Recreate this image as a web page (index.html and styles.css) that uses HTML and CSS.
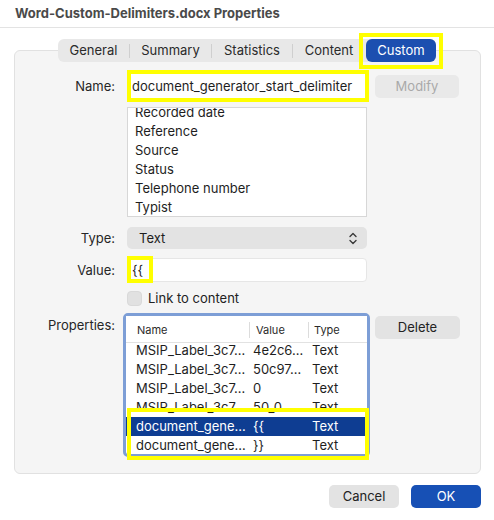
FILE: index.html
```html
<!DOCTYPE html>
<html>
<head>
<meta charset="utf-8">
<link rel="stylesheet" href="styles.css">
</head>
<body>
<div class="titlebar">Word-Custom-Delimiters.docx Properties</div>
<div class="content">
  <div class="tabs-wrap">
    <div class="tabs">
      <div class="tab w1">General</div>
      <div class="sep"></div>
      <div class="tab w2">Summary</div>
      <div class="sep"></div>
      <div class="tab w3">Statistics</div>
      <div class="sep"></div>
      <div class="tab w4">Content</div>
      <div class="tab w5 active">Custom<div class="hl hl-tab"></div></div>
    </div>
  </div>
  <div class="panel">
    <div class="row row-name">
      <div class="label">Name:</div>
      <div class="name-field">document_generator_start_delimiter</div>
      <div class="btn btn-modify">Modify</div>
    </div>
    <div class="row row-list">
      <div class="label"></div>
      <div class="listbox">
        <div class="list-inner">
          <div class="li">Recorded date</div>
          <div class="li">Reference</div>
          <div class="li">Source</div>
          <div class="li">Status</div>
          <div class="li">Telephone number</div>
          <div class="li">Typist</div>
        </div>
      </div>
    </div>
    <div class="row row-type">
      <div class="label">Type:</div>
      <div class="select">
        <span>Text</span>
        <svg class="chev" width="8" height="13" viewBox="0 0 8 13"><path d="M1 4.5 L4 1.5 L7 4.5 M1 8.5 L4 11.5 L7 8.5" fill="none" stroke="#3a3a3a" stroke-width="1.4" stroke-linecap="round" stroke-linejoin="round"/></svg>
      </div>
    </div>
    <div class="row row-value">
      <div class="label">Value:</div>
      <div class="value-field">{{<div class="hl hl-value"></div></div>
    </div>
    <div class="row row-link">
      <div class="label"></div>
      <div class="checkbox"></div>
      <div class="link-text">Link to content</div>
    </div>
    <div class="row row-props">
      <div class="label label-props">Properties:</div>
      <div class="table">
        <div class="thead">
          <div class="c1 th">Name</div>
          <div class="c2 th">Value</div>
          <div class="c3 th">Type</div>
        </div>
        <div class="tbody">
          <div class="tbody-inner">
            <div class="tr"><div class="c1">MSIP_Label_3c7…</div><div class="c2">4e2c6…</div><div class="c3">Text</div></div>
            <div class="tr"><div class="c1">MSIP_Label_3c7…</div><div class="c2">50c97…</div><div class="c3">Text</div></div>
            <div class="tr"><div class="c1">MSIP_Label_3c7…</div><div class="c2">0</div><div class="c3">Text</div></div>
            <div class="tr"><div class="c1">MSIP_Label_3c7…</div><div class="c2">50_0</div><div class="c3">Text</div></div>
            <div class="tr selected"><div class="c1">document_gene…</div><div class="c2">{{</div><div class="c3">Text</div></div>
            <div class="tr"><div class="c1">document_gene…</div><div class="c2">}}</div><div class="c3">Text</div></div>
          </div>
        </div>
        <div class="hl hl-rows"></div>
      </div>
      <div class="btn btn-delete">Delete</div>
    </div>
  </div>
  <div class="footer">
    <div class="btn btn-cancel">Cancel</div>
    <div class="btn btn-ok">OK</div>
  </div>
</div>
</body>
</html>
```
FILE: styles.css
```css
* { box-sizing: border-box; }
html, body { margin: 0; padding: 0; }
body {
  width: 494px;
  height: 520px;
  background: #ffffff;
  font-family: Inter, "Liberation Sans", Arial, sans-serif;
  font-size: 13px;
  color: #262626;
  overflow: hidden;
}
.titlebar {
  height: 28px;
  border-bottom: 1px solid #e3e3e3;
  padding-left: 15px;
  font-weight: 700;
  color: #4a4a4a;
  line-height: 26px;
  font-size: 13px;
}
.content {
  padding: 11px 13px 0 14px;
}
.tabs-wrap {
  display: flex;
  justify-content: center;
  position: relative;
  z-index: 2;
  margin-bottom: -12px;
  padding-right: 1px;
}
.tabs {
  display: flex;
  align-items: center;
  background: #e8e8e8;
  border-radius: 6px;
  height: 23px;
}
.tab {
  height: 23px;
  line-height: 23px;
  text-align: center;
  color: #2a2a2a;
  position: relative;
  white-space: nowrap;
}
.w1 { width: 71px; }
.w2 { width: 81px; }
.w3 { width: 80px; }
.w4 { width: 72px; }
.w5 { width: 70px; margin-left: 1px; }
.sep { width: 1px; height: 14px; background: #cfcfcf; }
.tab.active {
  background: #1c4fb0;
  color: #fff;
  border-radius: 6px;
}
.hl {
  position: absolute;
  border: 4px solid #ffff00;
  pointer-events: none;
}
.hl-tab { left: -7px; top: -6px; width: 84px; height: 36px; }
.panel {
  background: #f5f5f5;
  border: 1px solid #e1e1e1;
  border-radius: 6px;
  padding: 19px 0 16px 0;
  height: 424px;
}
.row { display: flex; }
.label {
  width: 112px;
  flex: none;
  text-align: right;
  padding-right: 12px;
  color: #262626;
}
.row-name { height: 32px; align-items: center; }
.name-field {
  width: 242px;
  height: 32px;
  border: 4px solid #ffff00;
  background: #fff;
  padding-left: 1px;
  line-height: 24px;
  color: #1e1e1e;
  white-space: nowrap;
  overflow: hidden;
}
.btn {
  height: 23px;
  line-height: 23px;
  text-align: center;
  border-radius: 5px;
  background: #e3e3e3;
  color: #222;
}
.btn-modify {
  width: 84px;
  margin-left: 6px;
  color: #a9a9a9;
  background: #e9e9e9;
}
.row-list { margin-top: 5px; }
.listbox {
  width: 240px;
  height: 110px;
  background: #fff;
  border: 1px solid #d7d7d7;
  overflow: hidden;
}
.list-inner { margin-top: -5px; padding-left: 7px; }
.li { height: 19px; line-height: 19px; color: #1e1e1e; }
.row-type { margin-top: 10px; height: 22px; align-items: center; }
.select {
  width: 240px;
  height: 22px;
  background: #e3e3e3;
  border-radius: 5px;
  display: flex;
  align-items: center;
  justify-content: space-between;
  padding: 0 10px 0 12px;
  color: #1e1e1e;
}
.chev { display: block; }
.row-value { margin-top: 9px; height: 24px; align-items: center; }
.value-field {
  position: relative;
  width: 240px;
  height: 24px;
  background: #fff;
  border: 1px solid #e6e6e6;
  border-radius: 4px;
  padding-left: 4px;
  line-height: 22px;
  color: #1e1e1e;
}
.hl-value { left: -1px; top: -3px; width: 26px; height: 27px; }
.row-link { margin-top: 8px; height: 16px; align-items: center; }
.checkbox {
  width: 15px;
  height: 15px;
  border-radius: 4px;
  background: #e1e1e1;
  border: 1px solid #d9d9d9;
}
.link-text { margin-left: 6px; color: #222; }
.row-props { margin-top: 7px; align-items: flex-start; }
.label-props { padding-top: 4px; }
.table {
  position: relative;
  margin-left: -4px;
  width: 247px;
  height: 144px;
  border: 3px solid #7d9ed6;
  border-radius: 5px;
  background: #fff;
}
.thead {
  display: flex;
  height: 27px;
  border-bottom: 1px solid #e2e2e2;
  align-items: center;
  font-size: 11px;
  color: #2a2a2a;
  position: relative;
  z-index: 1;
  background: #fff;
  padding-top: 2px;
}
.c1 { width: 123px; padding-left: 10px; white-space: nowrap; overflow: hidden; }
.c2 { width: 59px; padding-left: 4px; white-space: nowrap; }
.c3 { flex: 1; padding-left: 4px; white-space: nowrap; }
.th.c1 { padding-left: 11px; }
.th.c2 { padding-left: 6px; border-left: 1px solid #dcdcdc; height: 16px; line-height: 16px; }
.th.c3 { padding-left: 5px; border-left: 1px solid #dcdcdc; height: 16px; line-height: 16px; }
.tbody { height: 111px; overflow: hidden; }
.tbody-inner { margin-top: -2px; }
.tr { display: flex; height: 19px; line-height: 19px; color: #1e1e1e; }
.tr.selected { background: #0e3d92; color: #fff; }
.hl-rows { left: 1px; top: 92px; width: 242px; height: 52px; }
.btn-delete { width: 85px; margin-left: 5px; margin-top: 3px; }
.footer {
  display: flex;
  justify-content: flex-end;
  gap: 12px;
  margin-top: 11px;
}
.btn-cancel { width: 70px; }
.btn-ok { width: 70px; background: #1750b5; color: #fff; }
```
